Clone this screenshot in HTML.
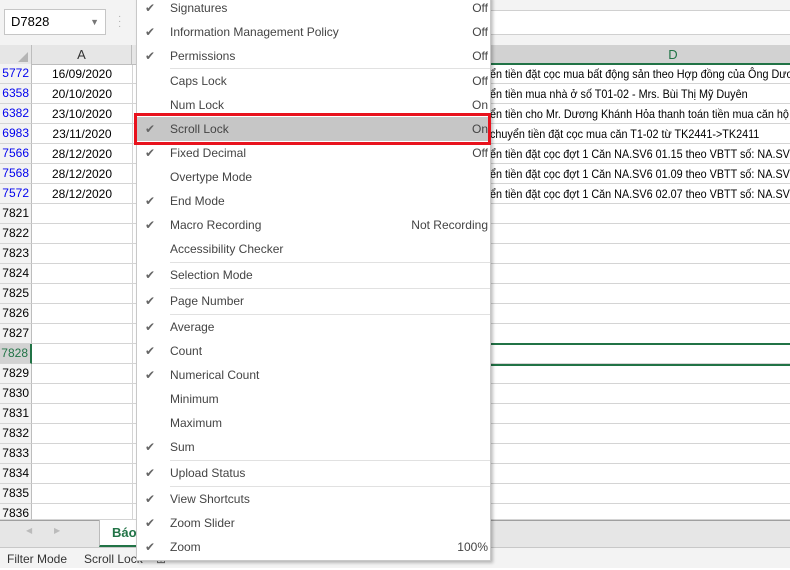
<!DOCTYPE html>
<html><head><meta charset="utf-8"><style>
*{margin:0;padding:0;box-sizing:border-box}
body{width:790px;height:568px;overflow:hidden;position:relative;background:#fff;font-family:"Segoe UI","Liberation Sans","DejaVu Sans",sans-serif;font-size:12px;color:#000}
.abs{position:absolute}
.row{position:absolute;left:0;width:790px;height:20px;border-bottom:1px solid #d4d4d4}
.rh{position:absolute;left:0;width:32px;height:20px;background:#f3f3f3;border-right:1px solid #bdbdbd;border-bottom:1px solid #d4d4d4;text-align:right;padding-right:2px;line-height:19px;font-size:12px}
.a{position:absolute;left:32px;width:100px;text-align:center;line-height:20px;font-size:12px}
.d{position:absolute;left:490px;line-height:20px;font-size:12px;white-space:nowrap;transform:scaleX(0.9);transform-origin:0 0}
.menu{position:absolute;left:136px;top:-4px;width:355px;height:565px;background:#fff;border:1px solid #c8c8c8;box-shadow:2px 2px 3px rgba(0,0,0,.25);color:#444;font-size:12px}
.mi{position:absolute;left:0;width:353px;height:24px;line-height:24px}
.mi .ck{position:absolute;left:8px;font-size:12px;color:#666}
.mi .t{position:absolute;left:33px}
.mi .v{position:absolute;right:2px}
.sep{position:absolute;left:33px;right:0;height:1px;background:#e1e1e1}
</style></head><body>
<div class="abs" style="left:0;top:0;width:790px;height:45px;background:#f3f3f3"></div>
<div class="abs" style="left:136px;top:10px;width:654px;height:25px;background:#fff;border-top:1px solid #d0d0d0;border-bottom:1px solid #d0d0d0"></div>
<div class="abs" style="left:4px;top:9px;width:102px;height:26px;background:#fff;border:1px solid #c6c6c6;line-height:24px;padding-left:6px;font-size:13px">D7828<span style="position:absolute;right:6px;top:0;color:#777;font-size:9px">▼</span></div>
<div class="abs" style="left:118px;top:14px;color:#aaa;font-size:10px;line-height:5px">·<br>·<br>·</div>
<div class="abs" style="left:0;top:45px;width:790px;height:20px;background:#e6e6e6;border-bottom:1px solid #bdbdbd"></div>
<div class="abs" style="left:0;top:45px;width:32px;height:20px;border-right:1px solid #bdbdbd"><div style="position:absolute;right:3px;bottom:3px;width:0;height:0;border-left:10px solid transparent;border-bottom:10px solid #b5b5b5"></div></div>
<div class="abs" style="left:32px;top:45px;width:100px;height:20px;border-right:1px solid #bdbdbd;text-align:center;line-height:20px;font-size:13px;color:#333">A</div>
<div class="abs" style="left:490px;top:45px;width:300px;height:20px;background:#d2d2d2;border-bottom:2px solid #217346;text-align:center;line-height:20px;font-size:13px;color:#217346;padding-left:66px">D</div>
<div class="abs" style="left:132px;top:65px;width:1px;height:455px;background:#d4d4d4"></div>
<div class="row" style="top:64px"></div><div class="rh" style="top:64px;color:#0000ee">5772</div><div class="a" style="top:64px">16/09/2020</div><div class="d" style="top:64px">ển tiền đặt cọc mua bất động sản theo Hợp đồng của Ông Dươ</div>
<div class="row" style="top:84px"></div><div class="rh" style="top:84px;color:#0000ee">6358</div><div class="a" style="top:84px">20/10/2020</div><div class="d" style="top:84px">ển tiền mua nhà ở số T01-02 - Mrs. Bùi Thị Mỹ Duyên</div>
<div class="row" style="top:104px"></div><div class="rh" style="top:104px;color:#0000ee">6382</div><div class="a" style="top:104px">23/10/2020</div><div class="d" style="top:104px">ển tiền cho Mr. Dương Khánh Hỏa thanh toán tiền mua căn hộ T</div>
<div class="row" style="top:124px"></div><div class="rh" style="top:124px;color:#0000ee">6983</div><div class="a" style="top:124px">23/11/2020</div><div class="d" style="top:124px">chuyển tiền đặt cọc mua căn T1-02 từ TK2441-&gt;TK2411</div>
<div class="row" style="top:144px"></div><div class="rh" style="top:144px;color:#0000ee">7566</div><div class="a" style="top:144px">28/12/2020</div><div class="d" style="top:144px">ển tiền đặt cọc đợt 1 Căn NA.SV6 01.15 theo VBTT số: NA.SV6</div>
<div class="row" style="top:164px"></div><div class="rh" style="top:164px;color:#0000ee">7568</div><div class="a" style="top:164px">28/12/2020</div><div class="d" style="top:164px">ển tiền đặt cọc đợt 1 Căn NA.SV6 01.09 theo VBTT số: NA.SV6</div>
<div class="row" style="top:184px"></div><div class="rh" style="top:184px;color:#0000ee">7572</div><div class="a" style="top:184px">28/12/2020</div><div class="d" style="top:184px">ển tiền đặt cọc đợt 1 Căn NA.SV6 02.07 theo VBTT số: NA.SV6</div>
<div class="row" style="top:204px"></div><div class="rh" style="top:204px">7821</div>
<div class="row" style="top:224px"></div><div class="rh" style="top:224px">7822</div>
<div class="row" style="top:244px"></div><div class="rh" style="top:244px">7823</div>
<div class="row" style="top:264px"></div><div class="rh" style="top:264px">7824</div>
<div class="row" style="top:284px"></div><div class="rh" style="top:284px">7825</div>
<div class="row" style="top:304px"></div><div class="rh" style="top:304px">7826</div>
<div class="row" style="top:324px"></div><div class="rh" style="top:324px">7827</div>
<div class="row" style="top:344px"></div><div class="rh" style="top:344px;background:#d2d2d2;color:#217346;border-right:2px solid #217346">7828</div>
<div class="abs" style="left:490px;top:343px;width:300px;height:2px;background:#217346"></div>
<div class="abs" style="left:490px;top:364px;width:300px;height:2px;background:#217346"></div>
<div class="row" style="top:364px"></div><div class="rh" style="top:364px">7829</div>
<div class="row" style="top:384px"></div><div class="rh" style="top:384px">7830</div>
<div class="row" style="top:404px"></div><div class="rh" style="top:404px">7831</div>
<div class="row" style="top:424px"></div><div class="rh" style="top:424px">7832</div>
<div class="row" style="top:444px"></div><div class="rh" style="top:444px">7833</div>
<div class="row" style="top:464px"></div><div class="rh" style="top:464px">7834</div>
<div class="row" style="top:484px"></div><div class="rh" style="top:484px">7835</div>
<div class="row" style="top:504px;height:16px"></div><div class="rh" style="top:504px;height:16px">7836</div>
<div class="abs" style="left:0;top:520px;width:790px;height:28px;background:#e6e6e6;border-top:1px solid #a0a0a0;border-bottom:1px solid #c8c8c8"></div>
<div class="abs" style="left:26px;top:526px;color:#bbb;font-size:8px">◀</div>
<div class="abs" style="left:54px;top:526px;color:#bbb;font-size:8px">▶</div>
<div class="abs" style="left:99px;top:520px;width:40px;height:27px;background:#fff;border-left:1px solid #bbb;border-bottom:2px solid #217346;color:#217346;font-weight:bold;font-size:13px;padding-left:12px;line-height:26px">Báo</div>
<div class="abs" style="left:0;top:548px;width:790px;height:20px;background:#f3f3f3;font-size:12px;color:#333;line-height:22px"><span style="position:absolute;left:7px">Filter Mode</span><span style="position:absolute;left:84px">Scroll Lock</span><span style="position:absolute;left:156px;color:#666">⊞</span></div>
<div class="menu">
<div class="mi" style="top:-1px"><span class="ck">✔</span><span class="t">Signatures</span><span class="v">Off</span></div>
<div class="mi" style="top:23px"><span class="ck">✔</span><span class="t">Information Management Policy</span><span class="v">Off</span></div>
<div class="mi" style="top:47px"><span class="ck">✔</span><span class="t">Permissions</span><span class="v">Off</span></div>
<div class="sep" style="top:71px"></div>
<div class="mi" style="top:72px"><span class="t">Caps Lock</span><span class="v">Off</span></div>
<div class="mi" style="top:96px"><span class="t">Num Lock</span><span class="v">On</span></div>
<div class="mi" style="top:120px;background:#c6c6c6"><span class="ck">✔</span><span class="t">Scroll Lock</span><span class="v">On</span></div>
<div class="mi" style="top:144px"><span class="ck">✔</span><span class="t">Fixed Decimal</span><span class="v">Off</span></div>
<div class="mi" style="top:168px"><span class="t">Overtype Mode</span></div>
<div class="mi" style="top:192px"><span class="ck">✔</span><span class="t">End Mode</span></div>
<div class="mi" style="top:216px"><span class="ck">✔</span><span class="t">Macro Recording</span><span class="v">Not Recording</span></div>
<div class="mi" style="top:240px"><span class="t">Accessibility Checker</span></div>
<div class="sep" style="top:265px"></div>
<div class="mi" style="top:266px"><span class="ck">✔</span><span class="t">Selection Mode</span></div>
<div class="sep" style="top:291px"></div>
<div class="mi" style="top:292px"><span class="ck">✔</span><span class="t">Page Number</span></div>
<div class="sep" style="top:317px"></div>
<div class="mi" style="top:318px"><span class="ck">✔</span><span class="t">Average</span></div>
<div class="mi" style="top:342px"><span class="ck">✔</span><span class="t">Count</span></div>
<div class="mi" style="top:366px"><span class="ck">✔</span><span class="t">Numerical Count</span></div>
<div class="mi" style="top:390px"><span class="t">Minimum</span></div>
<div class="mi" style="top:414px"><span class="t">Maximum</span></div>
<div class="mi" style="top:438px"><span class="ck">✔</span><span class="t">Sum</span></div>
<div class="sep" style="top:463px"></div>
<div class="mi" style="top:464px"><span class="ck">✔</span><span class="t">Upload Status</span></div>
<div class="sep" style="top:489px"></div>
<div class="mi" style="top:490px"><span class="ck">✔</span><span class="t">View Shortcuts</span></div>
<div class="mi" style="top:514px"><span class="ck">✔</span><span class="t">Zoom Slider</span></div>
<div class="mi" style="top:538px"><span class="ck">✔</span><span class="t">Zoom</span><span class="v">100%</span></div>
</div>
<div class="abs" style="left:134px;top:113px;width:357px;height:32px;border:3px solid #e8121d"></div>
</body></html>
